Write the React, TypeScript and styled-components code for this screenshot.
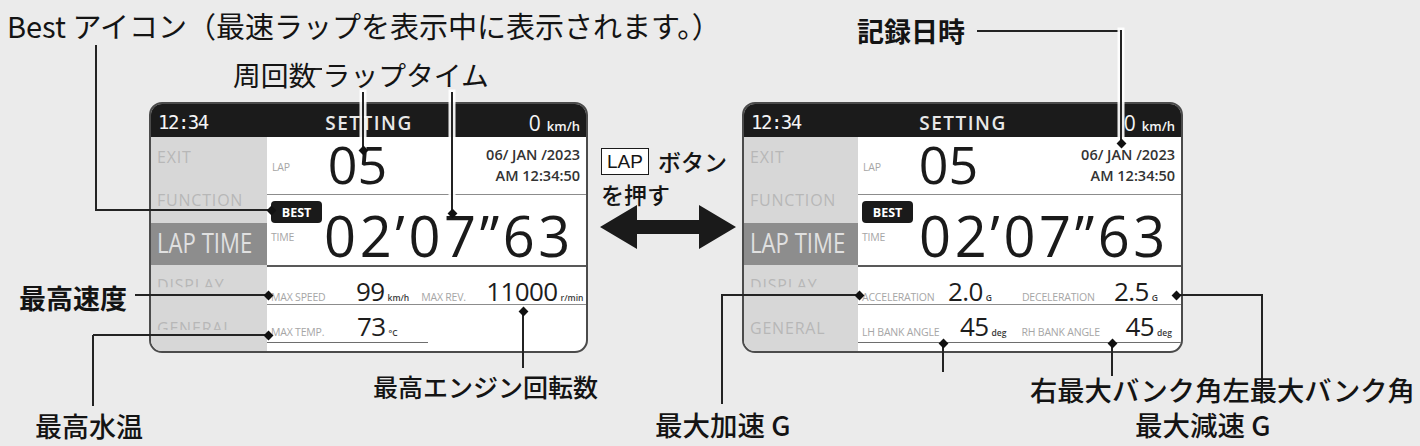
import React from "react";
import styled, { createGlobalStyle } from "styled-components";

const GlobalStyle = createGlobalStyle`
  html, body {
    margin: 0;
    padding: 0;
    background: #ebebeb;
  }
  body {
    font-family: "Noto Sans CJK JP", "Noto Sans", sans-serif;
  }
`;

const Canvas = styled.div`
  position: relative;
  width: 1420px;
  height: 446px;
  overflow: hidden;
  background: #ebebeb;
`;

const Stage = styled.div`
  display: flex;
  align-items: flex-start;
  padding: 102px 0 0 149px;
`;

/* ---------- meter screen ---------- */

const Frame = styled.div<{ $w: number }>`
  width: ${(p) => p.$w}px;
  height: 251px;
  box-sizing: border-box;
  border: 2px solid #4b4b4b;
  border-radius: 13px;
  overflow: hidden;
  background: #fff;
  display: grid;
  grid-template-rows: 33px 1fr;
  font-family: "Open Sans", "Noto Sans", sans-serif;
`;

const Header = styled.div`
  background: #1b1b1b;
  color: #e8e8e8;
  display: grid;
  grid-template-columns: 1fr auto 1fr;
  align-items: end;
  padding: 0 6px 3px 7px;
`;

const Clock = styled.span`
  font-family: "DejaVu Sans Mono", monospace;
  font-size: 19px;
  line-height: 1;
  letter-spacing: -1.5px;
  color: #f4f4f4;
  padding-bottom: 2px;
`;

const Title = styled.span`
  font-size: 19px;
  line-height: 1;
  font-weight: 600;
  letter-spacing: 1.5px;
  padding-bottom: 1px;
`;

const Speed = styled.span`
  justify-self: end;
  font-size: 21px;
  line-height: 1;
  color: #f4f4f4;
`;

const SpeedUnit = styled.span`
  font-size: 13px;
  font-weight: 600;
  margin-left: 6px;
`;

const Body = styled.div<{ $side: number }>`
  display: grid;
  grid-template-columns: ${(p) => p.$side}px 1fr;
  min-height: 0;
`;

const Sidebar = styled.div`
  background: #d7d7d7;
  display: grid;
  grid-template-rows: repeat(5, 1fr);
`;

const SideItem = styled.div<{ $active?: boolean }>`
  display: flex;
  align-items: center;
  padding-left: 6px;
  background: ${(p) => (p.$active ? "#8d8d8d" : "transparent")};
  color: ${(p) => (p.$active ? "#e0e0e0" : "#b7b7b7")};
  font-size: ${(p) => (p.$active ? 27 : 16)}px;
  letter-spacing: ${(p) => (p.$active ? 0 : 0.8)}px;
  white-space: nowrap;
  overflow: hidden;
`;

const SideText = styled.span<{ $cut?: number; $narrow?: boolean }>`
  display: block;
  line-height: 1;
  margin-top: -3px;
  clip-path: inset(0 0 ${(p) => p.$cut ?? 0}px 0);
  transform-origin: left center;
  ${(p) => (p.$narrow ? "transform: scaleX(0.82);" : "")}
`;

const Content = styled.div`
  display: grid;
  grid-template-rows: 58px 72px 38px 1fr;
  min-height: 0;
`;

const LapRow = styled.div`
  display: flex;
  align-items: flex-start;
  padding-left: 5px;
  border-bottom: 1px solid #8c8c8c;
`;

const SmallLabel = styled.span<{ $top?: number; $w?: number }>`
  display: inline-block;
  font-size: 10.5px;
  line-height: 1;
  color: #a6a6a6;
  letter-spacing: -0.2px;
  white-space: nowrap;
  margin-top: ${(p) => p.$top ?? 0}px;
  width: ${(p) => (p.$w ? `${p.$w}px` : "auto")};
`;

const LapNumber = styled.span`
  font-size: 52px;
  line-height: 1;
  color: #1a1a1a;
  margin: 1px 0 0 38px;
`;

const DateBlock = styled.div`
  margin-left: auto;
  padding: 7px 6px 0 0;
  text-align: right;
  font-size: 14.5px;
  line-height: 21px;
  font-weight: 600;
  color: #333;
`;

const TimeRow = styled.div`
  display: flex;
  align-items: flex-start;
  padding-left: 4px;
  border-bottom: 2px solid #595959;
`;

const TimeLabels = styled.div`
  display: flex;
  flex-direction: column;
  align-items: flex-start;
  padding-top: 6px;
`;

const BestBadge = styled.span`
  display: flex;
  align-items: center;
  justify-content: center;
  width: 51px;
  height: 22px;
  border-radius: 4px;
  background: #1a1a1a;
  color: #fff;
  font-size: 12.5px;
  font-weight: 700;
`;

const TimeValue = styled.span`
  margin: 12px 12px 0 auto;
  font-size: 56px;
  line-height: 1;
  letter-spacing: 3.6px;
  color: #1a1a1a;
`;

const StatRow = styled.div<{ $pad: number; $line?: boolean }>`
  display: flex;
  align-items: flex-start;
  padding: ${(p) => p.$pad}px 0 0 4px;
  ${(p) => (p.$line ? "border-bottom: 1px solid #8c8c8c;" : "")}
  min-width: 0;
`;

const StatLine = styled.div<{ $w?: number }>`
  display: flex;
  align-items: baseline;
  width: ${(p) => (p.$w ? `${p.$w}px` : "100%")};
  padding-bottom: 3px;
  border-bottom: 1px solid #6e6e6e;
  margin-left: -4px;
  padding-left: 4px;
`;

const StatGroup = styled.div`
  display: flex;
  align-items: baseline;
`;

const StatCell = styled.span<{ $gap?: number }>`
  display: inline-flex;
  align-items: baseline;
  margin-left: ${(p) => p.$gap ?? 0}px;
`;

const StatValue = styled.span`
  font-size: 26px;
  line-height: 1;
  font-weight: 500;
  letter-spacing: -0.6px;
  color: #1d1d1d;
`;

const StatUnit = styled.span`
  font-size: 8.5px;
  font-weight: 600;
  color: #3a3a3a;
  margin-left: 3px;
`;

type Stat = { label: string; w: number; value: string; unit: string; gap?: number };

const StatItems = ({ items }: { items: Stat[] }) => (
  <>
    {items.map((s) => (
      <StatCell key={s.label} $gap={s.gap}>
        <SmallLabel $w={s.w}>{s.label}</SmallLabel>
        <StatValue>{s.value}</StatValue>
        <StatUnit>{s.unit}</StatUnit>
      </StatCell>
    ))}
  </>
);

type ScreenProps = {
  width: number;
  side: number;
  row3: Stat[];
  row4: Stat[];
  underline?: number;
};

const MeterScreen = ({ width, side, row3, row4, underline }: ScreenProps) => (
  <Frame $w={width}>
    <Header>
      <Clock>12:34</Clock>
      <Title>SETTING</Title>
      <Speed>
        0<SpeedUnit>km/h</SpeedUnit>
      </Speed>
    </Header>
    <Body $side={side}>
      <Sidebar>
        <SideItem>
          <SideText>EXIT</SideText>
        </SideItem>
        <SideItem>
          <SideText>FUNCTION</SideText>
        </SideItem>
        <SideItem $active>
          <SideText $narrow>LAP TIME</SideText>
        </SideItem>
        <SideItem>
          <SideText $cut={6}>DISPLAY</SideText>
        </SideItem>
        <SideItem>
          <SideText $cut={underline ? 6 : 0}>GENERAL</SideText>
        </SideItem>
      </Sidebar>
      <Content>
        <LapRow>
          <SmallLabel $top={25}>LAP</SmallLabel>
          <LapNumber>05</LapNumber>
          <DateBlock>
            06/ JAN /2023
            <br />
            AM 12:34:50
          </DateBlock>
        </LapRow>
        <TimeRow>
          <TimeLabels>
            <BestBadge>BEST</BestBadge>
            <SmallLabel $top={9}>TIME</SmallLabel>
          </TimeLabels>
          <TimeValue>02’07”63</TimeValue>
        </TimeRow>
        <StatRow $pad={11} $line>
          <StatGroup>
            <StatItems items={row3} />
          </StatGroup>
        </StatRow>
        <StatRow $pad={8}>
          <StatLine $w={underline}>
            <StatItems items={row4} />
          </StatLine>
        </StatRow>
      </Content>
    </Body>
  </Frame>
);

/* ---------- middle: LAP button hint + arrow ---------- */

const Middle = styled.div`
  width: 154px;
  box-sizing: border-box;
  padding: 45px 0 0 13px;
  color: #151515;
`;

const HintLine = styled.div`
  display: flex;
  align-items: center;
  gap: 9px;
  font-size: 23px;
  line-height: 1;
  font-weight: 500;
  height: 29px;
`;

const KeyBox = styled.span`
  display: inline-flex;
  align-items: center;
  height: 25px;
  padding: 0 5px;
  border: 1.5px solid #1a1a1a;
  background: #fff;
  font-family: "Liberation Sans", Arial, sans-serif;
  font-size: 19px;
  font-weight: 400;
`;

const HintSecond = styled.div`
  font-size: 23px;
  line-height: 1;
  font-weight: 500;
  margin-top: 7px;
`;

const ArrowBox = styled.div`
  margin: -1px 0 0 -1px;
  line-height: 0;
`;

/* ---------- annotations on the diagram canvas ---------- */

const Note = styled.span<{ $x: number; $y: number; $size?: number; $weight?: number }>`
  position: absolute;
  left: ${(p) => p.$x}px;
  top: ${(p) => p.$y - (p.$size ?? 26) / 2}px;
  font-size: ${(p) => p.$size ?? 26}px;
  line-height: 1;
  font-weight: ${(p) => p.$weight ?? 500};
  color: #141414;
  white-space: nowrap;
`;

const Wire = styled.div<{ $x: number; $y: number; $w: number; $h: number; $halo?: boolean }>`
  position: absolute;
  left: ${(p) => p.$x}px;
  top: ${(p) => p.$y}px;
  width: ${(p) => p.$w}px;
  height: ${(p) => p.$h}px;
  background: #232323;
  ${(p) => (p.$halo ? "box-shadow: 0 0 0 2.5px rgba(255,255,255,0.92);" : "")}
`;

const Dot = styled.div<{ $x: number; $y: number }>`
  position: absolute;
  left: ${(p) => p.$x - 3.5}px;
  top: ${(p) => p.$y - 3.5}px;
  width: 7px;
  height: 7px;
  background: #111;
  transform: rotate(45deg);
`;

type Seg = { x: number; y: number; w: number; h: number; halo?: boolean };
const H = (x1: number, x2: number, y: number): Seg => ({ x: x1, y: y - 1, w: x2 - x1, h: 2 });
const V = (x: number, y1: number, y2: number, halo = false): Seg => ({ x: x - 1, y: y1, w: 2, h: y2 - y1, halo });

const wires: Seg[] = [
  V(96, 45, 211),
  H(96, 271, 210),
  H(307, 322, 69),
  V(363, 92, 150, true),
  V(452, 92, 213, true),
  H(977, 1122, 31),
  V(1121, 30, 143, true),
  H(135, 268, 295),
  V(93, 335, 406),
  H(93, 268, 335),
  V(523, 311, 368),
  H(722, 859, 295),
  V(722, 294, 404),
  V(943, 343, 372),
  V(1112, 343, 376),
  H(1176, 1263, 295),
  V(1262, 294, 392),
];

const dots = [
  [271, 210],
  [363, 150],
  [452, 213],
  [1121, 143],
  [268, 295],
  [268, 335],
  [523, 311],
  [859, 295],
  [943, 343],
  [1112, 343],
  [1176, 295],
];

export default function App() {
  return (
    <>
      <GlobalStyle />
      <Canvas>
        <Stage>
          <MeterScreen
            width={439}
            side={116}
            underline={157}
            row3={[
              { label: "MAX SPEED", w: 85, value: "99", unit: "km/h" },
              { label: "MAX REV.", w: 65, value: "11000", unit: "r/min", gap: 12 },
            ]}
            row4={[{ label: "MAX TEMP.", w: 86, value: "73", unit: "°C" }]}
          />
          <Middle>
            <HintLine>
              <KeyBox>LAP</KeyBox>
              <span>ボタン</span>
            </HintLine>
            <HintSecond>を押す</HintSecond>
            <ArrowBox>
              <svg width="136" height="44" viewBox="0 0 136 44">
                <path d="M0 22 L37 0 L37 15 L99 15 L99 0 L136 22 L99 44 L99 29 L37 29 L37 44 Z" fill="#1a1a1a" />
              </svg>
            </ArrowBox>
          </Middle>
          <MeterScreen
            width={441}
            side={114}
            row3={[
              { label: "ACCELERATION", w: 86, value: "2.0", unit: "G" },
              { label: "DECELERATION", w: 92, value: "2.5", unit: "G", gap: 30 },
            ]}
            row4={[
              { label: "LH BANK ANGLE", w: 98, value: "45", unit: "deg" },
              { label: "RH BANK ANGLE", w: 104, value: "45", unit: "deg", gap: 15 },
            ]}
          />
        </Stage>

        {wires.map((s, i) => (
          <Wire key={i} $x={s.x} $y={s.y} $w={s.w} $h={s.h} $halo={s.halo} />
        ))}
        {dots.map(([x, y], i) => (
          <Dot key={i} $x={x} $y={y} />
        ))}

        <Note $x={7} $y={25} $size={29} $weight={400}>
          Best アイコン（最速ラップを表示中に表示されます。）
        </Note>
        <Note $x={233} $y={75} $size={27.8} $weight={400}>
          周回数 ラップタイム
        </Note>
        <Note $x={857} $y={30} $size={27} $weight={700}>
          記録日時
        </Note>
        <Note $x={19} $y={297} $size={27} $weight={700}>
          最高速度
        </Note>
        <Note $x={35} $y={425} $size={27}>
          最高水温
        </Note>
        <Note $x={373} $y={386} $size={25}>
          最高エンジン回転数
        </Note>
        <Note $x={655} $y={425} $size={27.5}>
          最大加速 G
        </Note>
        <Note $x={1030} $y={390} $size={27.3}>
          右最大バンク角左最大バンク角
        </Note>
        <Note $x={1135} $y={425} $size={27.5}>
          最大減速 G
        </Note>
      </Canvas>
    </>
  );
}
